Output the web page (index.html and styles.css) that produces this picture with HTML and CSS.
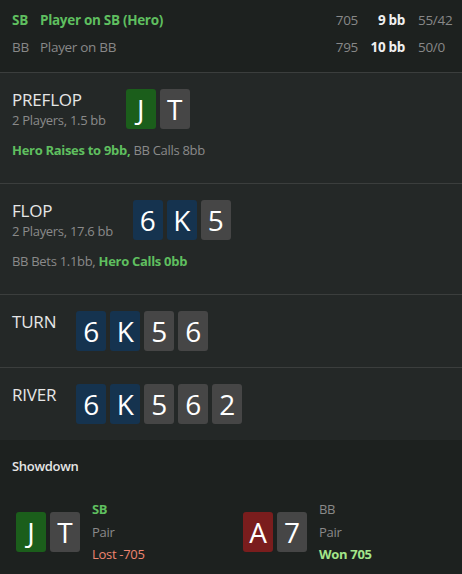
FILE: index.html
```html
<!DOCTYPE html>
<html>
<head>
<meta charset="utf-8">
<link rel="stylesheet" href="styles.css">
</head>
<body>
<div class="app">
  <div class="players">
    <div class="prow hero">
      <span class="pos">SB</span>
      <span class="pname">Player on SB (Hero)</span>
      <span class="stack">705</span>
      <span class="bb">9 bb</span>
      <span class="stat">55/42</span>
    </div>
    <div class="prow">
      <span class="pos">BB</span>
      <span class="pname">Player on BB</span>
      <span class="stack">795</span>
      <span class="bb">10 bb</span>
      <span class="stat">50/0</span>
    </div>
  </div>

  <div class="street">
    <div class="street-top">
      <div class="street-info">
        <div class="street-name">PREFLOP</div>
        <div class="street-sub">2 Players, 1.5 bb</div>
      </div>
      <div class="cards">
        <span class="card green">J</span>
        <span class="card grey">T</span>
      </div>
    </div>
    <div class="actions"><span class="hero-act">Hero Raises to 9bb,</span> BB Calls 8bb</div>
  </div>

  <div class="street">
    <div class="street-top">
      <div class="street-info">
        <div class="street-name">FLOP</div>
        <div class="street-sub">2 Players, 17.6 bb</div>
      </div>
      <div class="cards">
        <span class="card blue">6</span>
        <span class="card blue">K</span>
        <span class="card grey">5</span>
      </div>
    </div>
    <div class="actions">BB Bets 1.1bb, <span class="hero-act">Hero Calls 0bb</span></div>
  </div>

  <div class="street">
    <div class="street-top">
      <div class="street-info">
        <div class="street-name">TURN</div>
      </div>
      <div class="cards">
        <span class="card blue">6</span>
        <span class="card blue">K</span>
        <span class="card grey">5</span>
        <span class="card grey">6</span>
      </div>
    </div>
  </div>

  <div class="street last">
    <div class="street-top">
      <div class="street-info">
        <div class="street-name">RIVER</div>
      </div>
      <div class="cards">
        <span class="card blue">6</span>
        <span class="card blue">K</span>
        <span class="card grey">5</span>
        <span class="card grey">6</span>
        <span class="card grey">2</span>
      </div>
    </div>
  </div>

  <div class="showdown">
    <div class="sd-title">Showdown</div>
    <div class="sd-players">
      <div class="sd-player">
        <div class="cards">
          <span class="card green">J</span>
          <span class="card grey">T</span>
        </div>
        <div class="sd-info">
          <div class="sd-pos hero-act">SB</div>
          <div class="sd-hand">Pair</div>
          <div class="sd-result lost">Lost -705</div>
        </div>
      </div>
      <div class="sd-player">
        <div class="cards">
          <span class="card red">A</span>
          <span class="card grey">7</span>
        </div>
        <div class="sd-info">
          <div class="sd-pos">BB</div>
          <div class="sd-hand">Pair</div>
          <div class="sd-result won">Won 705</div>
        </div>
      </div>
    </div>
  </div>
</div>
</body>
</html>
```

FILE: styles.css
```css
html, body {
  margin: 0;
  padding: 0;
  background: #1d211f;
}
body {
  font-family: "Open Sans", "Noto Sans", sans-serif;
  color: #8c8c8c;
  width: 462px;
  height: 574px;
  overflow: hidden;
  letter-spacing: -0.3px;
}
.app {
  display: flex;
  flex-direction: column;
}
.players {
  background: #1d211f;
  padding: 6px 8px 12px 12px;
  border-bottom: 1px solid #3b3e3d;
}
.prow {
  display: grid;
  grid-template-columns: 28px 1fr 40px 47px 49px;
  height: 27px;
  align-items: center;
  font-size: 13.5px;
  color: #888;
}
.prow.hero .pos,
.prow.hero .pname {
  color: #5fbf5f;
  font-weight: 700;
}
.stack { text-align: right; }
.bb { text-align: right; color: #f0f0f0; font-weight: 700; }
.stat { padding-left: 13px; }

.street {
  background: #242827;
  padding: 16px 12px;
  border-bottom: 1px solid #3b3e3d;
}
.street.last { border-bottom: none; }
.street-top {
  display: flex;
  align-items: flex-start;
  gap: 20px;
}
.street-info {
  display: flex;
  flex-direction: column;
}
.street-name {
  color: #e6e6e6;
  font-size: 17px;
  line-height: 22px;
  letter-spacing: -0.2px;
}
.street-sub {
  font-size: 13px;
  line-height: 18px;
  color: #8a8a8a;
}
.actions {
  font-size: 13px;
  line-height: 18px;
  margin: 12px 0 8px;
  color: #8a8a8a;
}
.hero-act {
  color: #5fbf5f;
  font-weight: 700;
}
.cards {
  display: flex;
  gap: 4px;
}
.card {
  width: 30px;
  height: 40px;
  border-radius: 3px;
  display: flex;
  align-items: center;
  justify-content: center;
  color: #ffffff;
  font-size: 28px;
  line-height: 1;
  letter-spacing: 0;
}
.card.green { background: #1b5e1b; }
.card.grey { background: #464646; }
.card.blue { background: #15334f; }
.card.red { background: #7a1d1d; }

.showdown {
  background: #1d211f;
  padding: 17px 4px 0;
  height: 134px;
  box-sizing: border-box;
}
.sd-title {
  color: #e6e6e6;
  font-size: 13px;
  font-weight: 600;
  line-height: 18px;
  padding-left: 8px;
}
.sd-players {
  display: grid;
  grid-template-columns: 1fr 1fr;
  margin-top: 23px;
}
.sd-player {
  display: flex;
  align-items: center;
  gap: 12px;
  padding-left: 12px;
}
.sd-info {
  display: flex;
  flex-direction: column;
  font-size: 13px;
  line-height: 22.5px;
  color: #8a8a8a;
}
.sd-result.lost { color: #ee8570; }
.sd-result.won { color: #a3e58a; font-weight: 700; }
```
